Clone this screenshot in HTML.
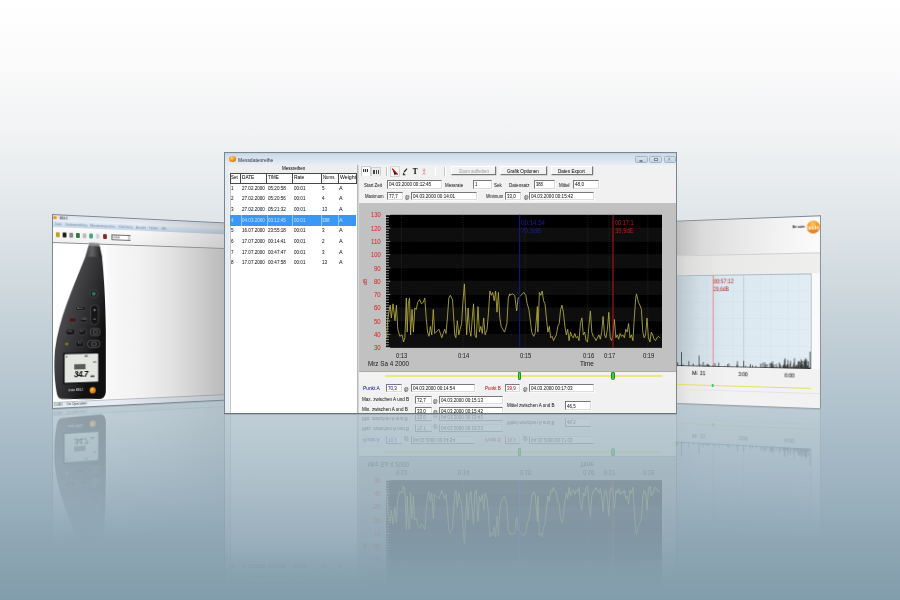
<!DOCTYPE html><html><head><meta charset="utf-8"><title>Messdatenreihe</title><style>
html,body{margin:0;padding:0}
body{width:900px;height:600px;overflow:hidden;position:relative;font-family:"Liberation Sans",sans-serif;background:#fff}
.t{position:absolute;white-space:nowrap;transform-origin:0 50%;line-height:1.15;font-family:"Liberation Sans",sans-serif;text-shadow:0 0 0.25px rgba(40,40,40,.3)}
#bg{position:absolute;left:0;top:0;width:900px;height:600px;background:linear-gradient(#ffffff 0,#fbfbfc 10%,#f3f4f5 20%,#e8ecee 30%,#dbe2e6 40%,#cbd6dc 50%,#bccad3 60%,#adc0cb 70%,#9eb4c0 80%,#8fa7b5 90%,#819cab 100%)}
#main{position:absolute;left:224px;top:152px;width:453px;height:262px;overflow:hidden;background:#f1f1f1;-webkit-box-reflect:below 0 linear-gradient(to bottom,transparent 33%,rgba(0,0,0,.025) 40%,rgba(0,0,0,.10) 52%,rgba(0,0,0,.17) 75%,rgba(0,0,0,.21) 100%)}
.panel{position:absolute;left:0;top:0;transform-origin:0 0;overflow:hidden}
</style></head><body><div id="bg"></div><div class="panel" id="lp" style="width:195.06px;height:195px;transform:matrix3d(0.9976805,0.1518337,0,0.0004874277,0,1,0,0,0,0,1,0,52,214,0,1);-webkit-box-reflect:below 0 linear-gradient(to bottom,transparent 30%,rgba(0,0,0,.06) 50%,rgba(0,0,0,.15) 75%,rgba(0,0,0,.21) 100%)"><div style="position:absolute;left:0.0px;top:0.0px;width:201.0px;height:6.6px;background:linear-gradient(#d9e2ea,#eaeff3)"></div><div style="position:absolute;left:0.8px;top:1.6px;width:3.8px;height:3.8px;border-radius:50%;background:#f0961c"></div><span class="t" style="left:7.5px;top:1.1px;font-size:4.60px;color:#333;transform:scaleX(0.707);">816-1</span><div style="position:absolute;left:0.0px;top:6.6px;width:201.0px;height:6.3px;background:linear-gradient(#dfe8f3,#c6d6e9)"></div><span class="t" style="left:3.4px;top:7.4px;font-size:4.40px;color:#73869f;transform:scaleX(0.675);text-shadow:none">Datei</span><span class="t" style="left:13.8px;top:7.4px;font-size:4.40px;color:#73869f;transform:scaleX(0.654);text-shadow:none">Geräteeinstellung</span><span class="t" style="left:39.8px;top:7.4px;font-size:4.40px;color:#73869f;transform:scaleX(0.701);text-shadow:none">Messdatenspeicher</span><span class="t" style="left:71.0px;top:7.4px;font-size:4.40px;color:#73869f;transform:scaleX(0.463);text-shadow:none">Echtzeitmessung</span><span class="t" style="left:90.2px;top:7.4px;font-size:4.40px;color:#73869f;transform:scaleX(0.781);text-shadow:none">Ansicht</span><span class="t" style="left:105.2px;top:7.4px;font-size:4.40px;color:#73869f;transform:scaleX(0.666);text-shadow:none">Fenster</span><span class="t" style="left:118.9px;top:7.4px;font-size:4.40px;color:#73869f;transform:scaleX(0.616);text-shadow:none">Hilfe</span><div style="position:absolute;left:0.0px;top:12.9px;width:201.0px;height:15.6px;background:linear-gradient(#fafafa,#f1f1f1)"></div><div style="position:absolute;left:3.7px;top:18.2px;width:4.2px;height:4.4px;background:#b9a52a;border-radius:1px"></div><div style="position:absolute;left:10.6px;top:18.2px;width:4.2px;height:4.4px;background:#1c1c1c;border-radius:1px"></div><div style="position:absolute;left:17.9px;top:18.2px;width:4.2px;height:4.4px;background:#8a8a8a;border-radius:1px"></div><div style="position:absolute;left:25.0px;top:18.2px;width:4.2px;height:4.4px;background:#2c7c3c;border-radius:1px"></div><div style="position:absolute;left:32.1px;top:18.2px;width:4.2px;height:4.4px;background:#bdbdbd;border-radius:1px"></div><div style="position:absolute;left:39.1px;top:18.2px;width:4.2px;height:4.4px;background:#45a58a;border-radius:1px"></div><div style="position:absolute;left:45.9px;top:18.2px;width:4.2px;height:4.4px;background:#d5d5d5;border-radius:1px"></div><div style="position:absolute;left:53.6px;top:18.2px;width:4.2px;height:4.4px;background:#8c2626;border-radius:1px"></div><div style="position:absolute;left:62.5px;top:17.8px;width:21.7px;height:5.8px;background:#fff;border:0.6px solid #6a6a6a;box-sizing:border-box"></div><div style="position:absolute;left:80.7px;top:18.5px;width:3.0px;height:4.4px;background:#d0d0d0"></div><span class="t" style="left:63.9px;top:18.7px;font-size:3.60px;color:#444;transform:scaleX(0.800);">COM1</span><div style="position:absolute;left:0.0px;top:0.0px;width:201.0px;height:28.4px;background:linear-gradient(90deg,rgba(0,0,0,0) 0,rgba(0,0,0,0) 45%,rgba(0,0,0,.07) 70%,rgba(0,0,0,.17) 100%)"></div><div style="position:absolute;left:0.0px;top:28.4px;width:201.0px;height:159.4px;background:linear-gradient(90deg,#fff 0,#fff 28%,#f8f8f8 30%,#f1f1f1 48%,#dfdfdf 68%,#c4c4c4 88%,#b6b6b6 100%)"></div><div style="position:absolute;left:0.0px;top:28.4px;width:57.0px;height:159.4px;background:#fff"></div><div style="position:absolute;left:0.0px;top:28.0px;width:201.0px;height:0.7px;background:#8f8f8f"></div><div style="position:absolute;left:0.0px;top:187.6px;width:201.0px;height:7.4px;background:#e6ecf2;border-top:0.6px solid #b8c2cc;box-sizing:border-box"></div><span class="t" style="left:1.5px;top:189.4px;font-size:3.90px;color:#555;transform:scaleX(0.800);">COM1</span><span class="t" style="left:14.6px;top:189.4px;font-size:3.90px;color:#555;transform:scaleX(0.918);">On Operation</span><svg style="position:absolute;left:0;top:0" width="201" height="195" viewBox="0 0 201 195"><defs><linearGradient id="dg" gradientUnits="userSpaceOnUse" x1="9.3" y1="83.9" x2="58.2" y2="99.0"><stop offset="0" stop-color="#5c5c5f"/><stop offset=".1" stop-color="#4c4c4f"/><stop offset=".4" stop-color="#3a3a3c"/><stop offset=".75" stop-color="#252527"/><stop offset="1" stop-color="#111112"/></linearGradient><linearGradient id="ng" x1="0" x2="1"><stop offset="0" stop-color="#444446"/><stop offset=".4" stop-color="#626265"/><stop offset="1" stop-color="#1a1a1b"/></linearGradient><radialGradient id="og" cx=".4" cy=".35"><stop offset="0" stop-color="#ffc35a"/><stop offset="1" stop-color="#e0760c"/></radialGradient></defs><path d="M39.31 27.28 L49.72 27.54 L50.15 30.81 L38.56 30.77 Z" fill="#8d8d8f"/><path d="M38.34 30.37 L50.37 30.39 L52.96 42.21 L34.72 42.28 Z" fill="url(#ng)"/><path d="M34.94 41.67 L52.74 41.60 C54.91 60.02 56.43 85.68 56.86 116.51 L56.86 178.69 C56.86 184.34 54.37 187.11 50.04 187.03 L10.86 185.46 C6.71 185.29 5.36 182.22 4.54 177.18 C2.68 166.09 1.65 152.04 3.09 136.06 C6.71 106.03 20.78 75.78 34.94 41.67 Z" fill="url(#dg)"/><circle cx="43.91" cy="79.42" r="3.90" fill="#161618" stroke="#58585b" stroke-width="0.70"/><circle cx="43.91" cy="79.42" r="2.10" fill="#2e7560"/><rect x="40.70" y="90.87" width="8.05" height="19.94" rx="3.40" fill="#151517" stroke="#5c5c5f" stroke-width="0.60" /><rect x="43.37" y="95.56" width="2.79" height="0.82" rx="0.00" fill="#8a8a8a" /><rect x="44.34" y="94.64" width="0.86" height="2.66" rx="0.00" fill="#8a8a8a" /><rect x="43.37" y="104.75" width="2.79" height="0.83" rx="0.00" fill="#8a8a8a" /><rect x="24.77" y="92.24" width="10.38" height="4.35" rx="2.20" fill="#19191b" stroke="#59595c" stroke-width="0.50" /><rect x="17.63" y="103.65" width="7.98" height="4.88" rx="2.20" fill="#471a1c" stroke="#59595c" stroke-width="0.50" /><rect x="29.42" y="103.89" width="7.43" height="4.50" rx="2.20" fill="#19191b" stroke="#59595c" stroke-width="0.50" /><rect x="14.50" y="115.12" width="9.43" height="6.15" rx="2.20" fill="#19191b" stroke="#59595c" stroke-width="0.50" /><rect x="27.94" y="115.24" width="7.96" height="6.17" rx="2.20" fill="#19191b" stroke="#59595c" stroke-width="0.50" /><rect x="40.70" y="114.94" width="9.67" height="7.05" rx="1.80" fill="#19191b" stroke="#707073" stroke-width="0.70" /><rect x="43.27" y="116.80" width="4.51" height="3.32" rx="0.40" fill="none" stroke="#9a9a9a" stroke-width="0.50" /><circle cx="15.33" cy="130.24" r="1.40" fill="#8d7f1c"/><rect x="24.77" y="127.36" width="8.67" height="6.22" rx="2.20" fill="#19191b" stroke="#59595c" stroke-width="0.50" /><rect x="37.49" y="127.13" width="12.88" height="7.15" rx="2.80" fill="#19191b" stroke="#707073" stroke-width="0.70" /><rect x="41.55" y="129.23" width="4.94" height="2.94" rx="0.40" fill="none" stroke="#9a9a9a" stroke-width="0.50" /><rect x="11.58" y="139.03" width="38.57" height="31.71" rx="1.20" fill="#111113" /><rect x="13.04" y="140.47" width="35.60" height="28.79" rx="0.60" fill="#e3e6e1" /><rect x="23.19" y="150.90" width="11.85" height="5.29" rx="0.00" fill="#2c2c2c" opacity=".75"/><rect x="40.48" y="162.86" width="4.07" height="1.35" rx="0.00" fill="#222" /><circle cx="42.73" cy="177.94" r="3.30" fill="url(#og)"/></svg><span class="t" style="left:22.7px;top:155.9px;font-size:9.40px;color:#111;transform:scaleX(0.875);font-weight:bold;font-style:italic;letter-spacing:-0.3px">34.7</span><span class="t" style="left:14.1px;top:142.0px;font-size:3.40px;color:#222;transform:scaleX(0.900);">A</span><span class="t" style="left:34.1px;top:142.1px;font-size:3.20px;color:#222;transform:scaleX(0.900);">dB</span><span class="t" style="left:42.6px;top:147.8px;font-size:2.80px;color:#333;transform:scaleX(0.900);">1/8</span><span class="t" style="left:16.8px;top:175.4px;font-size:3.90px;color:#d0d0d0;transform:scaleX(0.776);font-weight:bold">testo 816-1</span><span class="t" style="left:25.6px;top:92.9px;font-size:2.80px;color:#aaa;transform:scaleX(0.900);">Menu</span><span class="t" style="left:30.5px;top:104.6px;font-size:2.60px;color:#aaa;transform:scaleX(0.900);">Hold</span><span class="t" style="left:16.0px;top:116.7px;font-size:2.60px;color:#aaa;transform:scaleX(0.900);">Time</span><span class="t" style="left:29.4px;top:116.8px;font-size:2.60px;color:#aaa;transform:scaleX(0.900);">A/C</span><span class="t" style="left:26.5px;top:128.9px;font-size:2.60px;color:#aaa;transform:scaleX(0.900);">F/S</span><div style="position:absolute;left:0.0px;top:187.6px;width:201.0px;height:7.4px;background:linear-gradient(90deg,rgba(0,0,0,0) 0,rgba(0,0,0,0) 35%,rgba(0,0,0,.08) 60%,rgba(0,0,0,.2) 100%)"></div><div style="position:absolute;left:0.0px;top:0.0px;width:201.0px;height:195.0px;box-sizing:border-box;border:0.9px solid #7d868e;border-right:none"></div></div><div class="panel" id="rp" style="clip-path:polygon(6.78px 0,100% 0,100% 300%,6.78px 300%);width:156px;height:194px;transform:matrix3d(0.6634162,-0.115502,0,-0.0003709287,0,0.9416495,0,0,0,0,1,0,670,220.86,0,1);-webkit-box-reflect:below 0 linear-gradient(to bottom,transparent 30%,rgba(0,0,0,.05) 50%,rgba(0,0,0,.13) 75%,rgba(0,0,0,.19) 100%)"><div style="position:absolute;left:0.0px;top:0.0px;width:156.0px;height:194.0px;background:#fafafa"></div><div style="position:absolute;left:0.0px;top:0.0px;width:156.0px;height:38.0px;background:linear-gradient(90deg,#ababab 0,#c4c4c4 8%,#dadada 22%,#e7e7e7 45%,#f3f3f3 75%,#fbfbfb 100%)"></div><div style="position:absolute;left:0.0px;top:37.4px;width:156.0px;height:1.0px;background:#cfcfcf"></div><div style="position:absolute;left:0.0px;top:38.4px;width:156.0px;height:19.9px;background:linear-gradient(90deg,#c4c4c4 0,#dcdcda 12%,#e9e9e7 35%,#efefed 100%)"></div><div style="position:absolute;left:0.0px;top:58.3px;width:145.8px;height:96.1px;background:linear-gradient(90deg,#a9b4bc 0,#bfcbd3 9%,#d2dee6 22%,#dce8f0 40%,#e1edf5 100%)"></div><div style="position:absolute;left:0.0px;top:58.3px;width:145.8px;height:96.1px;background:repeating-linear-gradient(90deg,rgba(140,170,190,.07) 0 0.5px,transparent 0.5px 5.6px),repeating-linear-gradient(0deg,rgba(140,170,190,.07) 0 0.5px,transparent 0.5px 5.6px)"></div><div style="position:absolute;left:78.1px;top:58.3px;width:0.6px;height:96.1px;background:#c0ced8"></div><div style="position:absolute;left:0.0px;top:57.9px;width:145.8px;height:0.7px;background:#a9b9c3"></div><div style="position:absolute;left:145.8px;top:57.9px;width:0.6px;height:96.7px;background:#b9c6ce"></div><div style="position:absolute;left:45.7px;top:58.3px;width:0.6px;height:96.1px;background:#e08c8c"></div><span class="t" style="left:47.0px;top:61.2px;font-size:6.40px;color:#d63636;transform:scaleX(0.843);">00:57:12</span><span class="t" style="left:47.0px;top:68.7px;font-size:6.40px;color:#d63636;transform:scaleX(0.789);">29,6dB</span><svg style="position:absolute;left:0;top:125.4px" width="156" height="30" viewBox="0 125.4 156 30"><line x1="0" x2="145.8" y1="154.0" y2="154.0" stroke="#222" stroke-width="0.7"/><line x1="4.2" x2="4.2" y1="154.0" y2="152.3" stroke="#0c0c0c" stroke-width="0.65"/><line x1="6.3" x2="6.3" y1="154.0" y2="152.9" stroke="#0c0c0c" stroke-width="0.65"/><line x1="7.0" x2="7.0" y1="154.0" y2="151.2" stroke="#0c0c0c" stroke-width="0.65"/><line x1="8.4" x2="8.4" y1="154.0" y2="150.4" stroke="#0c0c0c" stroke-width="0.65"/><line x1="11.2" x2="11.2" y1="154.0" y2="153.4" stroke="#0c0c0c" stroke-width="0.65"/><line x1="12.6" x2="12.6" y1="154.0" y2="153.2" stroke="#0c0c0c" stroke-width="0.65"/><line x1="14.0" x2="14.0" y1="154.0" y2="152.5" stroke="#0c0c0c" stroke-width="0.65"/><line x1="25.2" x2="25.2" y1="154.0" y2="151.4" stroke="#0c0c0c" stroke-width="0.65"/><line x1="29.4" x2="29.4" y1="154.0" y2="153.1" stroke="#0c0c0c" stroke-width="0.65"/><line x1="32.9" x2="32.9" y1="154.0" y2="151.9" stroke="#0c0c0c" stroke-width="0.65"/><line x1="35.0" x2="35.0" y1="154.0" y2="152.8" stroke="#0c0c0c" stroke-width="0.65"/><line x1="37.1" x2="37.1" y1="154.0" y2="153.0" stroke="#0c0c0c" stroke-width="0.65"/><line x1="37.8" x2="37.8" y1="154.0" y2="153.3" stroke="#0c0c0c" stroke-width="0.65"/><line x1="39.2" x2="39.2" y1="154.0" y2="152.2" stroke="#0c0c0c" stroke-width="0.65"/><line x1="40.6" x2="40.6" y1="154.0" y2="151.5" stroke="#0c0c0c" stroke-width="0.65"/><line x1="41.3" x2="41.3" y1="154.0" y2="151.9" stroke="#0c0c0c" stroke-width="0.65"/><line x1="42.0" x2="42.0" y1="154.0" y2="152.6" stroke="#0c0c0c" stroke-width="0.65"/><line x1="42.7" x2="42.7" y1="154.0" y2="153.0" stroke="#0c0c0c" stroke-width="0.65"/><line x1="46.2" x2="46.2" y1="154.0" y2="152.7" stroke="#0c0c0c" stroke-width="0.65"/><line x1="48.3" x2="48.3" y1="154.0" y2="150.4" stroke="#0c0c0c" stroke-width="0.65"/><line x1="49.0" x2="49.0" y1="154.0" y2="153.0" stroke="#0c0c0c" stroke-width="0.65"/><line x1="51.8" x2="51.8" y1="154.0" y2="153.3" stroke="#0c0c0c" stroke-width="0.65"/><line x1="58.8" x2="58.8" y1="154.0" y2="153.2" stroke="#0c0c0c" stroke-width="0.65"/><line x1="61.6" x2="61.6" y1="154.0" y2="151.5" stroke="#0c0c0c" stroke-width="0.65"/><line x1="63.0" x2="63.0" y1="154.0" y2="150.6" stroke="#0c0c0c" stroke-width="0.65"/><line x1="65.8" x2="65.8" y1="154.0" y2="153.3" stroke="#0c0c0c" stroke-width="0.65"/><line x1="71.4" x2="71.4" y1="154.0" y2="151.6" stroke="#0c0c0c" stroke-width="0.65"/><line x1="72.1" x2="72.1" y1="154.0" y2="153.1" stroke="#0c0c0c" stroke-width="0.65"/><line x1="76.3" x2="76.3" y1="154.0" y2="153.4" stroke="#0c0c0c" stroke-width="0.65"/><line x1="78.4" x2="78.4" y1="154.0" y2="153.2" stroke="#0c0c0c" stroke-width="0.65"/><line x1="80.5" x2="80.5" y1="154.0" y2="152.8" stroke="#0c0c0c" stroke-width="0.65"/><line x1="84.7" x2="84.7" y1="154.0" y2="153.3" stroke="#0c0c0c" stroke-width="0.65"/><line x1="85.4" x2="85.4" y1="154.0" y2="150.8" stroke="#0c0c0c" stroke-width="0.65"/><line x1="87.5" x2="87.5" y1="154.0" y2="151.9" stroke="#0c0c0c" stroke-width="0.65"/><line x1="91.0" x2="91.0" y1="154.0" y2="152.2" stroke="#0c0c0c" stroke-width="0.65"/><line x1="95.9" x2="95.9" y1="154.0" y2="150.1" stroke="#0c0c0c" stroke-width="0.65"/><line x1="98.0" x2="98.0" y1="154.0" y2="149.2" stroke="#0c0c0c" stroke-width="0.65"/><line x1="100.8" x2="100.8" y1="154.0" y2="150.8" stroke="#0c0c0c" stroke-width="0.65"/><line x1="102.2" x2="102.2" y1="154.0" y2="150.4" stroke="#0c0c0c" stroke-width="0.65"/><line x1="105.0" x2="105.0" y1="154.0" y2="149.7" stroke="#0c0c0c" stroke-width="0.65"/><line x1="106.4" x2="106.4" y1="154.0" y2="148.8" stroke="#0c0c0c" stroke-width="0.65"/><line x1="107.1" x2="107.1" y1="154.0" y2="149.6" stroke="#0c0c0c" stroke-width="0.65"/><line x1="107.8" x2="107.8" y1="154.0" y2="150.7" stroke="#0c0c0c" stroke-width="0.65"/><line x1="108.5" x2="108.5" y1="154.0" y2="152.8" stroke="#0c0c0c" stroke-width="0.65"/><line x1="109.9" x2="109.9" y1="154.0" y2="150.6" stroke="#0c0c0c" stroke-width="0.65"/><line x1="111.3" x2="111.3" y1="154.0" y2="153.4" stroke="#0c0c0c" stroke-width="0.65"/><line x1="112.0" x2="112.0" y1="154.0" y2="150.1" stroke="#0c0c0c" stroke-width="0.65"/><line x1="112.7" x2="112.7" y1="154.0" y2="153.0" stroke="#0c0c0c" stroke-width="0.65"/><line x1="114.8" x2="114.8" y1="154.0" y2="148.4" stroke="#0c0c0c" stroke-width="0.65"/><line x1="115.5" x2="115.5" y1="154.0" y2="150.2" stroke="#0c0c0c" stroke-width="0.65"/><line x1="116.2" x2="116.2" y1="154.0" y2="151.8" stroke="#0c0c0c" stroke-width="0.65"/><line x1="118.3" x2="118.3" y1="154.0" y2="151.2" stroke="#0c0c0c" stroke-width="0.65"/><line x1="118.9" x2="118.9" y1="154.0" y2="151.8" stroke="#0c0c0c" stroke-width="0.65"/><line x1="119.4" x2="119.4" y1="154.0" y2="150.1" stroke="#0c0c0c" stroke-width="0.65"/><line x1="120.0" x2="120.0" y1="154.0" y2="145.7" stroke="#0c0c0c" stroke-width="0.65"/><line x1="120.5" x2="120.5" y1="154.0" y2="144.2" stroke="#0c0c0c" stroke-width="0.65"/><line x1="121.1" x2="121.1" y1="154.0" y2="152.8" stroke="#0c0c0c" stroke-width="0.65"/><line x1="121.6" x2="121.6" y1="154.0" y2="152.1" stroke="#0c0c0c" stroke-width="0.65"/><line x1="122.2" x2="122.2" y1="154.0" y2="150.9" stroke="#0c0c0c" stroke-width="0.65"/><line x1="122.7" x2="122.7" y1="154.0" y2="150.1" stroke="#0c0c0c" stroke-width="0.65"/><line x1="123.3" x2="123.3" y1="154.0" y2="145.8" stroke="#0c0c0c" stroke-width="0.65"/><line x1="123.8" x2="123.8" y1="154.0" y2="150.6" stroke="#0c0c0c" stroke-width="0.65"/><line x1="124.4" x2="124.4" y1="154.0" y2="153.3" stroke="#0c0c0c" stroke-width="0.65"/><line x1="124.9" x2="124.9" y1="154.0" y2="153.3" stroke="#0c0c0c" stroke-width="0.65"/><line x1="125.5" x2="125.5" y1="154.0" y2="149.3" stroke="#0c0c0c" stroke-width="0.65"/><line x1="126.0" x2="126.0" y1="154.0" y2="146.5" stroke="#0c0c0c" stroke-width="0.65"/><line x1="126.6" x2="126.6" y1="154.0" y2="153.0" stroke="#0c0c0c" stroke-width="0.65"/><line x1="127.1" x2="127.1" y1="154.0" y2="153.3" stroke="#0c0c0c" stroke-width="0.65"/><line x1="127.7" x2="127.7" y1="154.0" y2="152.4" stroke="#0c0c0c" stroke-width="0.65"/><line x1="128.2" x2="128.2" y1="154.0" y2="153.3" stroke="#0c0c0c" stroke-width="0.65"/><line x1="128.8" x2="128.8" y1="154.0" y2="150.6" stroke="#0c0c0c" stroke-width="0.65"/><line x1="129.3" x2="129.3" y1="154.0" y2="148.3" stroke="#0c0c0c" stroke-width="0.65"/><line x1="129.9" x2="129.9" y1="154.0" y2="144.0" stroke="#0c0c0c" stroke-width="0.65"/><line x1="130.4" x2="130.4" y1="154.0" y2="152.6" stroke="#0c0c0c" stroke-width="0.65"/><line x1="131.0" x2="131.0" y1="154.0" y2="152.7" stroke="#0c0c0c" stroke-width="0.65"/><line x1="131.5" x2="131.5" y1="154.0" y2="150.4" stroke="#0c0c0c" stroke-width="0.65"/><line x1="132.1" x2="132.1" y1="154.0" y2="152.7" stroke="#0c0c0c" stroke-width="0.65"/><line x1="132.6" x2="132.6" y1="154.0" y2="151.5" stroke="#0c0c0c" stroke-width="0.65"/><line x1="133.2" x2="133.2" y1="154.0" y2="149.8" stroke="#0c0c0c" stroke-width="0.65"/><line x1="133.7" x2="133.7" y1="154.0" y2="147.0" stroke="#0c0c0c" stroke-width="0.65"/><line x1="134.3" x2="134.3" y1="154.0" y2="146.5" stroke="#0c0c0c" stroke-width="0.65"/><line x1="134.8" x2="134.8" y1="154.0" y2="153.2" stroke="#0c0c0c" stroke-width="0.65"/><line x1="135.4" x2="135.4" y1="154.0" y2="147.4" stroke="#0c0c0c" stroke-width="0.65"/><line x1="135.9" x2="135.9" y1="154.0" y2="150.5" stroke="#0c0c0c" stroke-width="0.65"/><line x1="136.5" x2="136.5" y1="154.0" y2="144.8" stroke="#0c0c0c" stroke-width="0.65"/><line x1="137.0" x2="137.0" y1="154.0" y2="149.3" stroke="#0c0c0c" stroke-width="0.65"/><line x1="137.6" x2="137.6" y1="154.0" y2="146.4" stroke="#0c0c0c" stroke-width="0.65"/><line x1="138.1" x2="138.1" y1="154.0" y2="150.4" stroke="#0c0c0c" stroke-width="0.65"/><line x1="138.7" x2="138.7" y1="154.0" y2="152.6" stroke="#0c0c0c" stroke-width="0.65"/><line x1="139.2" x2="139.2" y1="154.0" y2="146.1" stroke="#0c0c0c" stroke-width="0.65"/><line x1="139.8" x2="139.8" y1="154.0" y2="147.5" stroke="#0c0c0c" stroke-width="0.65"/><line x1="140.3" x2="140.3" y1="154.0" y2="144.9" stroke="#0c0c0c" stroke-width="0.65"/><line x1="140.9" x2="140.9" y1="154.0" y2="143.7" stroke="#0c0c0c" stroke-width="0.65"/><line x1="141.4" x2="141.4" y1="154.0" y2="146.5" stroke="#0c0c0c" stroke-width="0.65"/><line x1="142.0" x2="142.0" y1="154.0" y2="144.8" stroke="#0c0c0c" stroke-width="0.65"/><line x1="142.5" x2="142.5" y1="154.0" y2="151.5" stroke="#0c0c0c" stroke-width="0.65"/><line x1="143.1" x2="143.1" y1="154.0" y2="150.7" stroke="#0c0c0c" stroke-width="0.65"/><line x1="143.6" x2="143.6" y1="154.0" y2="146.8" stroke="#0c0c0c" stroke-width="0.65"/><line x1="144.2" x2="144.2" y1="154.0" y2="153.3" stroke="#0c0c0c" stroke-width="0.65"/><line x1="144.7" x2="144.7" y1="154.0" y2="153.2" stroke="#0c0c0c" stroke-width="0.65"/><line x1="145.3" x2="145.3" y1="154.0" y2="152.8" stroke="#0c0c0c" stroke-width="0.65"/><line x1="6.5" x2="6.5" y1="154.0" y2="150.0" stroke="#0c0c0c" stroke-width="0.65"/><line x1="12.5" x2="12.5" y1="154.0" y2="139.5" stroke="#0c0c0c" stroke-width="0.65"/><line x1="20.5" x2="20.5" y1="154.0" y2="149.0" stroke="#0c0c0c" stroke-width="0.65"/><line x1="31.5" x2="31.5" y1="154.0" y2="143.0" stroke="#0c0c0c" stroke-width="0.65"/><line x1="36.0" x2="36.0" y1="154.0" y2="149.5" stroke="#0c0c0c" stroke-width="0.65"/><line x1="52.5" x2="52.5" y1="154.0" y2="150.0" stroke="#0c0c0c" stroke-width="0.65"/><line x1="72.0" x2="72.0" y1="154.0" y2="148.0" stroke="#0c0c0c" stroke-width="0.65"/><line x1="78.5" x2="78.5" y1="154.0" y2="147.5" stroke="#0c0c0c" stroke-width="0.65"/><line x1="100.0" x2="100.0" y1="154.0" y2="148.5" stroke="#0c0c0c" stroke-width="0.65"/><line x1="108.0" x2="108.0" y1="154.0" y2="147.5" stroke="#0c0c0c" stroke-width="0.65"/><line x1="145.3" x2="145.3" y1="154.0" y2="137.0" stroke="#0c0c0c" stroke-width="0.65"/></svg><div style="position:absolute;left:0.0px;top:154.4px;width:156.0px;height:39.6px;background:linear-gradient(90deg,#d6d6d6 0,#eaeaea 14%,#f2f2f2 40%)"></div><span class="t" style="left:24.3px;top:157.8px;font-size:6.00px;color:#222;transform:scaleX(0.881);">Mi&nbsp; 21</span><span class="t" style="left:73.4px;top:157.8px;font-size:6.00px;color:#222;transform:scaleX(0.822);">3:00</span><span class="t" style="left:119.7px;top:157.9px;font-size:6.00px;color:#222;transform:scaleX(0.856);">6:00</span><div style="position:absolute;left:0.0px;top:172.7px;width:145.8px;height:1.2px;background:#e3e05a"></div><div style="position:absolute;left:45.0px;top:171.7px;width:2.2px;height:3.2px;background:#3fcf3f"></div><div style="position:absolute;left:0.0px;top:177.9px;width:156.0px;height:0.6px;background:#e4e4e4"></div><div style="position:absolute;left:141.5px;top:4.9px;width:13.6px;height:13.6px;border-radius:50%;background:radial-gradient(circle at 45% 25%,#ffc870 0,#f7981f 40%,#e8730c 85%,#d9650a 100%);overflow:hidden"><span class="t" style="left:0.5px;top:3.4px;font-size:6.2px;color:#fff;font-weight:bold;transform:scaleX(0.88);text-shadow:none;letter-spacing:-0.1px">testo</span></div><span class="t" style="left:127.5px;top:9.2px;font-size:4.20px;color:#444;transform:scaleX(0.772);font-weight:bold">Be sure.</span><div style="position:absolute;left:154.9px;top:0.0px;width:1.1px;height:194.0px;background:#8c9399"></div><div style="position:absolute;left:0.0px;top:0.0px;width:156.0px;height:0.9px;background:#808990"></div><div style="position:absolute;left:0.0px;top:193.1px;width:156.0px;height:0.9px;background:#9ea4a9"></div></div><div id="main"><div style="position:absolute;left:0.0px;top:0.0px;width:453.0px;height:13.0px;background:linear-gradient(#bccbdb 0,#d0dce9 22%,#dae4ef 60%,#e6edf5 100%)"></div><div style="position:absolute;left:5.4px;top:4.0px;width:6.6px;height:6.4px;border-radius:50%;background:radial-gradient(circle at 40% 30%,#ffd27a 0,#f39a1f 45%,#c8560c 100%)"></div><span class="t" style="left:14.3px;top:4.0px;font-size:6.20px;color:#4c5560;transform:scaleX(0.803);">Messdatenreihe</span><div style="position:absolute;left:411.2px;top:4.0px;width:12.4px;height:7.2px;box-sizing:border-box;border:0.8px solid #a3b3c3;border-radius:1.5px;background:linear-gradient(#d6e0eb,#c6d3e0)"></div><div style="position:absolute;left:425.4px;top:4.0px;width:12.4px;height:7.2px;box-sizing:border-box;border:0.8px solid #a3b3c3;border-radius:1.5px;background:linear-gradient(#d6e0eb,#c6d3e0)"></div><div style="position:absolute;left:439.6px;top:4.0px;width:12.4px;height:7.2px;box-sizing:border-box;border:0.8px solid #a3b3c3;border-radius:1.5px;background:linear-gradient(#d6e0eb,#c6d3e0)"></div><div style="position:absolute;left:415.2px;top:7.6px;width:4.2px;height:1.8px;box-sizing:border-box;border:0.7px solid #7a8896;border-radius:1px;background:#eef3f8"></div><div style="position:absolute;left:429.6px;top:5.8px;width:4.2px;height:3.6px;box-sizing:border-box;border:0.8px solid #7a8896;background:#eef3f8"></div><span class="t" style="left:443.4px;top:4.9px;font-size:4.60px;color:#7a8896;transform:scaleX(1.000);text-shadow:none">✕</span><div style="position:absolute;left:0.0px;top:13.0px;width:453.0px;height:250.0px;background:#e6ecf3"></div><div style="position:absolute;left:5.4px;top:13.0px;width:447.0px;height:250.0px;background:#f1f1f1"></div><div style="position:absolute;left:5.5px;top:12.5px;width:127.5px;height:250.0px;background:#fff;border-left:1px solid #c2c6ca"></div><div style="position:absolute;left:5.5px;top:12.5px;width:127.5px;height:8.0px;background:#eeeeee"></div><span class="t" style="left:58.0px;top:13.2px;font-size:5.60px;color:#222;transform:scaleX(0.808);">Messreihen</span><div style="position:absolute;left:5.8px;top:20.5px;width:126.8px;height:11.0px;background:#fff;box-sizing:border-box;border:1px solid #484848;border-width:1.1px 1px 1.2px 1px"></div><span class="t" style="left:7.2px;top:21.9px;font-size:6.00px;color:#1a1a1a;transform:scaleX(0.755);">Set</span><div style="position:absolute;left:16.2px;top:20.5px;width:1.3px;height:11.0px;background:#484848"></div><span class="t" style="left:18.3px;top:21.9px;font-size:6.00px;color:#1a1a1a;transform:scaleX(0.784);">DATE</span><div style="position:absolute;left:42.2px;top:20.5px;width:1.3px;height:11.0px;background:#484848"></div><span class="t" style="left:44.3px;top:21.9px;font-size:6.00px;color:#1a1a1a;transform:scaleX(0.740);">TIME</span><div style="position:absolute;left:67.9px;top:20.5px;width:1.3px;height:11.0px;background:#484848"></div><span class="t" style="left:69.9px;top:21.9px;font-size:6.00px;color:#1a1a1a;transform:scaleX(0.813);">Rate</span><div style="position:absolute;left:96.5px;top:20.5px;width:1.3px;height:11.0px;background:#484848"></div><span class="t" style="left:98.5px;top:21.9px;font-size:6.00px;color:#1a1a1a;transform:scaleX(0.721);">Nums</span><div style="position:absolute;left:113.7px;top:20.5px;width:1.3px;height:11.0px;background:#484848"></div><span class="t" style="left:115.7px;top:21.9px;font-size:6.00px;color:#1a1a1a;transform:scaleX(0.867);">Weight</span><span class="t" style="left:7.2px;top:32.5px;font-size:6.00px;color:#2c2c2c;transform:scaleX(0.760);">1</span><span class="t" style="left:18.2px;top:32.5px;font-size:6.00px;color:#2c2c2c;transform:scaleX(0.760);">27.02.2000</span><span class="t" style="left:44.3px;top:32.5px;font-size:6.00px;color:#2c2c2c;transform:scaleX(0.760);">05:20:58</span><span class="t" style="left:70.0px;top:32.5px;font-size:6.00px;color:#2c2c2c;transform:scaleX(0.760);">00:01</span><span class="t" style="left:98.3px;top:32.5px;font-size:6.00px;color:#2c2c2c;transform:scaleX(0.760);">5</span><span class="t" style="left:115.2px;top:32.5px;font-size:6.00px;color:#2c2c2c;transform:scaleX(0.900);">A</span><span class="t" style="left:7.2px;top:43.4px;font-size:6.00px;color:#2c2c2c;transform:scaleX(0.760);">2</span><span class="t" style="left:18.2px;top:43.4px;font-size:6.00px;color:#2c2c2c;transform:scaleX(0.760);">27.02.2000</span><span class="t" style="left:44.3px;top:43.4px;font-size:6.00px;color:#2c2c2c;transform:scaleX(0.760);">05:20:56</span><span class="t" style="left:70.0px;top:43.4px;font-size:6.00px;color:#2c2c2c;transform:scaleX(0.760);">00:01</span><span class="t" style="left:98.3px;top:43.4px;font-size:6.00px;color:#2c2c2c;transform:scaleX(0.760);">4</span><span class="t" style="left:115.2px;top:43.4px;font-size:6.00px;color:#2c2c2c;transform:scaleX(0.900);">A</span><span class="t" style="left:7.2px;top:53.9px;font-size:6.00px;color:#2c2c2c;transform:scaleX(0.760);">3</span><span class="t" style="left:18.2px;top:53.9px;font-size:6.00px;color:#2c2c2c;transform:scaleX(0.760);">27.02.2000</span><span class="t" style="left:44.3px;top:53.9px;font-size:6.00px;color:#2c2c2c;transform:scaleX(0.760);">05:21:32</span><span class="t" style="left:70.0px;top:53.9px;font-size:6.00px;color:#2c2c2c;transform:scaleX(0.760);">00:01</span><span class="t" style="left:98.3px;top:53.9px;font-size:6.00px;color:#2c2c2c;transform:scaleX(0.760);">13</span><span class="t" style="left:115.2px;top:53.9px;font-size:6.00px;color:#2c2c2c;transform:scaleX(0.900);">A</span><div style="position:absolute;left:6.2px;top:63.4px;width:126.2px;height:10.3px;background:#3a98f4"></div><div style="position:absolute;left:16.5px;top:63.4px;width:0.8px;height:10.3px;background:#8cc6fb"></div><div style="position:absolute;left:42.5px;top:63.4px;width:0.8px;height:10.3px;background:#8cc6fb"></div><div style="position:absolute;left:68.1px;top:63.4px;width:0.8px;height:10.3px;background:#8cc6fb"></div><div style="position:absolute;left:96.7px;top:63.4px;width:0.8px;height:10.3px;background:#8cc6fb"></div><div style="position:absolute;left:113.9px;top:63.4px;width:0.8px;height:10.3px;background:#8cc6fb"></div><span class="t" style="left:7.2px;top:64.9px;font-size:6.00px;color:#c4e2ff;transform:scaleX(0.760);text-shadow:none">4</span><span class="t" style="left:18.2px;top:64.9px;font-size:6.00px;color:#c4e2ff;transform:scaleX(0.760);text-shadow:none">04.03.2000</span><span class="t" style="left:44.3px;top:64.9px;font-size:6.00px;color:#c4e2ff;transform:scaleX(0.760);text-shadow:none">00:12:45</span><span class="t" style="left:70.0px;top:64.9px;font-size:6.00px;color:#c4e2ff;transform:scaleX(0.760);text-shadow:none">00:01</span><span class="t" style="left:98.3px;top:64.9px;font-size:6.00px;color:#c4e2ff;transform:scaleX(0.760);text-shadow:none">388</span><span class="t" style="left:115.2px;top:64.9px;font-size:6.00px;color:#c4e2ff;transform:scaleX(0.900);text-shadow:none">A</span><span class="t" style="left:7.2px;top:75.2px;font-size:6.00px;color:#2c2c2c;transform:scaleX(0.760);">5</span><span class="t" style="left:18.2px;top:75.2px;font-size:6.00px;color:#2c2c2c;transform:scaleX(0.760);">16.07.2000</span><span class="t" style="left:44.3px;top:75.2px;font-size:6.00px;color:#2c2c2c;transform:scaleX(0.760);">23:55:18</span><span class="t" style="left:70.0px;top:75.2px;font-size:6.00px;color:#2c2c2c;transform:scaleX(0.760);">00:01</span><span class="t" style="left:98.3px;top:75.2px;font-size:6.00px;color:#2c2c2c;transform:scaleX(0.760);">3</span><span class="t" style="left:115.2px;top:75.2px;font-size:6.00px;color:#2c2c2c;transform:scaleX(0.900);">A</span><span class="t" style="left:7.2px;top:86.0px;font-size:6.00px;color:#2c2c2c;transform:scaleX(0.760);">6</span><span class="t" style="left:18.2px;top:86.0px;font-size:6.00px;color:#2c2c2c;transform:scaleX(0.760);">17.07.2000</span><span class="t" style="left:44.3px;top:86.0px;font-size:6.00px;color:#2c2c2c;transform:scaleX(0.760);">00:14:41</span><span class="t" style="left:70.0px;top:86.0px;font-size:6.00px;color:#2c2c2c;transform:scaleX(0.760);">00:01</span><span class="t" style="left:98.3px;top:86.0px;font-size:6.00px;color:#2c2c2c;transform:scaleX(0.760);">2</span><span class="t" style="left:115.2px;top:86.0px;font-size:6.00px;color:#2c2c2c;transform:scaleX(0.900);">A</span><span class="t" style="left:7.2px;top:96.6px;font-size:6.00px;color:#2c2c2c;transform:scaleX(0.760);">7</span><span class="t" style="left:18.2px;top:96.6px;font-size:6.00px;color:#2c2c2c;transform:scaleX(0.760);">17.07.2000</span><span class="t" style="left:44.3px;top:96.6px;font-size:6.00px;color:#2c2c2c;transform:scaleX(0.760);">00:47:47</span><span class="t" style="left:70.0px;top:96.6px;font-size:6.00px;color:#2c2c2c;transform:scaleX(0.760);">00:01</span><span class="t" style="left:98.3px;top:96.6px;font-size:6.00px;color:#2c2c2c;transform:scaleX(0.760);">3</span><span class="t" style="left:115.2px;top:96.6px;font-size:6.00px;color:#2c2c2c;transform:scaleX(0.900);">A</span><span class="t" style="left:7.2px;top:107.2px;font-size:6.00px;color:#2c2c2c;transform:scaleX(0.760);">8</span><span class="t" style="left:18.2px;top:107.2px;font-size:6.00px;color:#2c2c2c;transform:scaleX(0.760);">17.07.2000</span><span class="t" style="left:44.3px;top:107.2px;font-size:6.00px;color:#2c2c2c;transform:scaleX(0.760);">00:47:58</span><span class="t" style="left:70.0px;top:107.2px;font-size:6.00px;color:#2c2c2c;transform:scaleX(0.760);">00:01</span><span class="t" style="left:98.3px;top:107.2px;font-size:6.00px;color:#2c2c2c;transform:scaleX(0.760);">13</span><span class="t" style="left:115.2px;top:107.2px;font-size:6.00px;color:#2c2c2c;transform:scaleX(0.900);">A</span><div style="position:absolute;left:133.2px;top:12.5px;width:2.2px;height:250.0px;background:linear-gradient(90deg,#a9a9a9,#e4e4e4)"></div><div style="position:absolute;left:136.5px;top:14.2px;width:10.6px;height:9.6px;background:#fbfbfb;border:0.6px solid #c9c9c9;border-bottom:none;box-sizing:border-box"></div><div style="position:absolute;left:147.4px;top:15.2px;width:9.6px;height:8.6px;background:#ececec;border:0.6px solid #cfcfcf;border-bottom:none;box-sizing:border-box"></div><div style="position:absolute;left:138.6px;top:17.0px;width:5.6px;height:2.6px;background:repeating-linear-gradient(90deg,#333 0 1.2px,#ddd 1.2px 1.9px)"></div><div style="position:absolute;left:149.4px;top:18.4px;width:5.4px;height:3.6px;background:repeating-linear-gradient(90deg,#444 0 1.6px,#eee 1.6px 2.6px)"></div><div style="position:absolute;left:162.0px;top:14.6px;width:0.8px;height:9.4px;background:#c4c4c4"></div><div style="position:absolute;left:162.8px;top:14.6px;width:0.8px;height:9.4px;background:#fff"></div><div style="position:absolute;left:210.6px;top:14.6px;width:0.8px;height:9.4px;background:#c4c4c4"></div><div style="position:absolute;left:211.4px;top:14.6px;width:0.8px;height:9.4px;background:#fff"></div><div style="position:absolute;left:220.2px;top:14.6px;width:0.8px;height:9.4px;background:#c4c4c4"></div><div style="position:absolute;left:221.0px;top:14.6px;width:0.8px;height:9.4px;background:#fff"></div><svg style="position:absolute;left:164.4px;top:13.9px" width="46" height="12" viewBox="0 0 46 12"><rect x="2.6" y="0.8" width="9" height="9.6" fill="#f7f7f7" stroke="#bdbdbd" stroke-width="0.6"/><path d="M4.2 2.6 L9.8 8.6 L7.6 8.2 L6.8 9.6 Z" fill="#111"/><path d="M4.2 2.6 L9.6 8.4" stroke="#d41414" stroke-width="1.3"/><path d="M18.6 2.2 L15.6 5.6 L16.6 6.4 L19.4 3.0 Z" fill="#222"/><path d="M15.2 6.2 L17.8 9.2 L14.8 9.2 Z" fill="#222"/><path d="M15.4 6.8 l1.6 1.6" stroke="#e0c020" stroke-width="0.7"/><path d="M36.1 2.2 v2.0 m-1.5 0.2 h3.0 m-1.5 0 v2.2 l-1.4 2.2 m1.4 -2.2 l1.4 2.2" stroke="#dd6a6a" stroke-width="0.6" fill="none"/></svg><span class="t" style="left:188.7px;top:15.5px;font-size:7.20px;color:#111;transform:scaleX(1.000);font-family:'Liberation Serif',serif;font-weight:bold">T</span><div style="position:absolute;left:227.2px;top:14.0px;width:44.6px;height:9.4px;box-sizing:border-box;background:#f2f2f2;border:0.8px solid;border-color:#fdfdfd #777 #777 #fdfdfd;box-shadow:0.5px 0.5px 0 #b8b8b8"></div><span class="t" style="left:234.6px;top:15.7px;font-size:5.80px;color:#b9b9b9;transform:scaleX(0.734);">Zoom aufheben</span><div style="position:absolute;left:275.9px;top:14.0px;width:46.8px;height:9.4px;box-sizing:border-box;background:#f2f2f2;border:0.8px solid;border-color:#fdfdfd #777 #777 #fdfdfd;box-shadow:0.5px 0.5px 0 #b8b8b8"></div><span class="t" style="left:283.4px;top:15.7px;font-size:5.80px;color:#222;transform:scaleX(0.783);">Grafik Optionen</span><div style="position:absolute;left:326.8px;top:14.0px;width:41.9px;height:9.4px;box-sizing:border-box;background:#f2f2f2;border:0.8px solid;border-color:#fdfdfd #777 #777 #fdfdfd;box-shadow:0.5px 0.5px 0 #b8b8b8"></div><span class="t" style="left:334.0px;top:15.7px;font-size:5.80px;color:#222;transform:scaleX(0.789);">Daten Export</span><span class="t" style="left:140.0px;top:29.7px;font-size:5.80px;color:#303030;transform:scaleX(0.765);">Start Zeit</span><div style="position:absolute;left:163.4px;top:28.4px;width:55.0px;height:8.2px;box-sizing:border-box;background:#fff;border:0.9px solid;border-color:#787878 #dcdcdc #dcdcdc #787878;box-shadow:0.6px 0.6px 0 #fff"></div><span class="t" style="left:165.3px;top:29.3px;font-size:5.90px;color:#2c2c2c;transform:scaleX(0.780);">04.03.2000 00:12:45</span><span class="t" style="left:221.0px;top:29.7px;font-size:5.80px;color:#303030;transform:scaleX(0.763);">Messrate</span><div style="position:absolute;left:249.0px;top:28.4px;width:19.4px;height:8.2px;box-sizing:border-box;background:#fff;border:0.9px solid;border-color:#787878 #dcdcdc #dcdcdc #787878;box-shadow:0.6px 0.6px 0 #fff"></div><span class="t" style="left:250.9px;top:29.3px;font-size:5.90px;color:#2c2c2c;transform:scaleX(0.760);">1</span><span class="t" style="left:270.0px;top:29.7px;font-size:5.80px;color:#303030;transform:scaleX(0.770);">Sek</span><span class="t" style="left:284.9px;top:29.7px;font-size:5.80px;color:#303030;transform:scaleX(0.789);">Datensatz</span><div style="position:absolute;left:310.2px;top:28.4px;width:20.8px;height:8.2px;box-sizing:border-box;background:#fff;border:0.9px solid;border-color:#787878 #dcdcdc #dcdcdc #787878;box-shadow:0.6px 0.6px 0 #fff"></div><span class="t" style="left:312.1px;top:29.3px;font-size:5.90px;color:#2c2c2c;transform:scaleX(0.691);">388</span><span class="t" style="left:335.2px;top:29.7px;font-size:5.80px;color:#303030;transform:scaleX(0.765);">Mittel</span><div style="position:absolute;left:349.2px;top:28.4px;width:26.2px;height:8.2px;box-sizing:border-box;background:#fff;border:0.9px solid;border-color:#787878 #dcdcdc #dcdcdc #787878;box-shadow:0.6px 0.6px 0 #fff"></div><span class="t" style="left:351.1px;top:29.3px;font-size:5.90px;color:#2c2c2c;transform:scaleX(0.784);">48,0</span><span class="t" style="left:141.0px;top:41.2px;font-size:5.80px;color:#303030;transform:scaleX(0.740);">Maximum</span><div style="position:absolute;left:163.0px;top:40.2px;width:15.8px;height:8.0px;box-sizing:border-box;background:#fff;border:0.9px solid;border-color:#787878 #dcdcdc #dcdcdc #787878;box-shadow:0.6px 0.6px 0 #fff"></div><span class="t" style="left:164.9px;top:41.0px;font-size:5.90px;color:#2c2c2c;transform:scaleX(0.766);">77,7</span><span class="t" style="left:181.3px;top:41.3px;font-size:6.20px;color:#3a3a3a;transform:scaleX(0.740);">@</span><div style="position:absolute;left:187.4px;top:40.2px;width:65.4px;height:8.0px;box-sizing:border-box;background:#fff;border:0.9px solid;border-color:#787878 #dcdcdc #dcdcdc #787878;box-shadow:0.6px 0.6px 0 #fff"></div><span class="t" style="left:189.3px;top:41.0px;font-size:5.90px;color:#2c2c2c;transform:scaleX(0.780);">04.03.2000 00:14:01</span><span class="t" style="left:261.5px;top:41.2px;font-size:5.80px;color:#303030;transform:scaleX(0.735);">Minimum</span><div style="position:absolute;left:280.8px;top:40.2px;width:15.9px;height:8.0px;box-sizing:border-box;background:#fff;border:0.9px solid;border-color:#787878 #dcdcdc #dcdcdc #787878;box-shadow:0.6px 0.6px 0 #fff"></div><span class="t" style="left:282.7px;top:41.0px;font-size:5.90px;color:#2c2c2c;transform:scaleX(0.758);">33,0</span><span class="t" style="left:299.5px;top:41.3px;font-size:6.20px;color:#3a3a3a;transform:scaleX(0.740);">@</span><div style="position:absolute;left:305.1px;top:40.2px;width:65.3px;height:8.0px;box-sizing:border-box;background:#fff;border:0.9px solid;border-color:#787878 #dcdcdc #dcdcdc #787878;box-shadow:0.6px 0.6px 0 #fff"></div><span class="t" style="left:307.0px;top:41.0px;font-size:5.90px;color:#2c2c2c;transform:scaleX(0.778);">04.03.2000 00:15:42</span><div style="position:absolute;left:135.4px;top:51.4px;width:316.4px;height:167.8px;background:#c1c1c1"></div><svg style="position:absolute;left:135.4px;top:51.4px" width="316" height="168" viewBox="359.4 203.4 316 168"><rect x="386.4" y="215.2" width="276.0" height="132.8" fill="#000"/><rect x="386.4" y="228.48" width="276.0" height="13.28" fill="#0e0e0e"/><rect x="386.4" y="255.04" width="276.0" height="13.28" fill="#0e0e0e"/><rect x="386.4" y="281.60" width="276.0" height="13.28" fill="#0e0e0e"/><rect x="386.4" y="308.16" width="276.0" height="13.28" fill="#0e0e0e"/><rect x="386.4" y="334.72" width="276.0" height="13.28" fill="#0e0e0e"/><line x1="386.4" x2="662.4" y1="334.72" y2="334.72" stroke="#2a2a2a" stroke-width="0.5" stroke-dasharray="1 1.5"/><line x1="386.4" x2="662.4" y1="321.44" y2="321.44" stroke="#2a2a2a" stroke-width="0.5" stroke-dasharray="1 1.5"/><line x1="386.4" x2="662.4" y1="308.16" y2="308.16" stroke="#2a2a2a" stroke-width="0.5" stroke-dasharray="1 1.5"/><line x1="386.4" x2="662.4" y1="294.88" y2="294.88" stroke="#2a2a2a" stroke-width="0.5" stroke-dasharray="1 1.5"/><line x1="386.4" x2="662.4" y1="281.60" y2="281.60" stroke="#2a2a2a" stroke-width="0.5" stroke-dasharray="1 1.5"/><line x1="386.4" x2="662.4" y1="268.32" y2="268.32" stroke="#2a2a2a" stroke-width="0.5" stroke-dasharray="1 1.5"/><line x1="386.4" x2="662.4" y1="255.04" y2="255.04" stroke="#2a2a2a" stroke-width="0.5" stroke-dasharray="1 1.5"/><line x1="386.4" x2="662.4" y1="241.76" y2="241.76" stroke="#2a2a2a" stroke-width="0.5" stroke-dasharray="1 1.5"/><line x1="386.4" x2="662.4" y1="228.48" y2="228.48" stroke="#2a2a2a" stroke-width="0.5" stroke-dasharray="1 1.5"/><line x1="401.8" x2="401.8" y1="215.2" y2="348.0" stroke="#3a3a3a" stroke-width="0.6" stroke-dasharray="1 1.4"/><line x1="463.6" x2="463.6" y1="215.2" y2="348.0" stroke="#3a3a3a" stroke-width="0.6" stroke-dasharray="1 1.4"/><line x1="525.4" x2="525.4" y1="215.2" y2="348.0" stroke="#3a3a3a" stroke-width="0.6" stroke-dasharray="1 1.4"/><line x1="588.2" x2="588.2" y1="215.2" y2="348.0" stroke="#3a3a3a" stroke-width="0.6" stroke-dasharray="1 1.4"/><line x1="609.6" x2="609.6" y1="215.2" y2="348.0" stroke="#3a3a3a" stroke-width="0.6" stroke-dasharray="1 1.4"/><line x1="648.2" x2="648.2" y1="215.2" y2="348.0" stroke="#3a3a3a" stroke-width="0.6" stroke-dasharray="1 1.4"/><line x1="386.4" x2="390.6" y1="348.00" y2="348.00" stroke="#f2f2f2" stroke-width="0.65"/><line x1="386.4" x2="389.2" y1="345.34" y2="345.34" stroke="#f2f2f2" stroke-width="0.65"/><line x1="386.4" x2="389.2" y1="342.69" y2="342.69" stroke="#f2f2f2" stroke-width="0.65"/><line x1="386.4" x2="389.2" y1="340.03" y2="340.03" stroke="#f2f2f2" stroke-width="0.65"/><line x1="386.4" x2="389.2" y1="337.38" y2="337.38" stroke="#f2f2f2" stroke-width="0.65"/><line x1="386.4" x2="390.6" y1="334.72" y2="334.72" stroke="#f2f2f2" stroke-width="0.65"/><line x1="386.4" x2="389.2" y1="332.06" y2="332.06" stroke="#f2f2f2" stroke-width="0.65"/><line x1="386.4" x2="389.2" y1="329.41" y2="329.41" stroke="#f2f2f2" stroke-width="0.65"/><line x1="386.4" x2="389.2" y1="326.75" y2="326.75" stroke="#f2f2f2" stroke-width="0.65"/><line x1="386.4" x2="389.2" y1="324.10" y2="324.10" stroke="#f2f2f2" stroke-width="0.65"/><line x1="386.4" x2="390.6" y1="321.44" y2="321.44" stroke="#f2f2f2" stroke-width="0.65"/><line x1="386.4" x2="389.2" y1="318.78" y2="318.78" stroke="#f2f2f2" stroke-width="0.65"/><line x1="386.4" x2="389.2" y1="316.13" y2="316.13" stroke="#f2f2f2" stroke-width="0.65"/><line x1="386.4" x2="389.2" y1="313.47" y2="313.47" stroke="#f2f2f2" stroke-width="0.65"/><line x1="386.4" x2="389.2" y1="310.82" y2="310.82" stroke="#f2f2f2" stroke-width="0.65"/><line x1="386.4" x2="390.6" y1="308.16" y2="308.16" stroke="#f2f2f2" stroke-width="0.65"/><line x1="386.4" x2="389.2" y1="305.50" y2="305.50" stroke="#f2f2f2" stroke-width="0.65"/><line x1="386.4" x2="389.2" y1="302.85" y2="302.85" stroke="#f2f2f2" stroke-width="0.65"/><line x1="386.4" x2="389.2" y1="300.19" y2="300.19" stroke="#f2f2f2" stroke-width="0.65"/><line x1="386.4" x2="389.2" y1="297.54" y2="297.54" stroke="#f2f2f2" stroke-width="0.65"/><line x1="386.4" x2="390.6" y1="294.88" y2="294.88" stroke="#f2f2f2" stroke-width="0.65"/><line x1="386.4" x2="389.2" y1="292.22" y2="292.22" stroke="#f2f2f2" stroke-width="0.65"/><line x1="386.4" x2="389.2" y1="289.57" y2="289.57" stroke="#f2f2f2" stroke-width="0.65"/><line x1="386.4" x2="389.2" y1="286.91" y2="286.91" stroke="#f2f2f2" stroke-width="0.65"/><line x1="386.4" x2="389.2" y1="284.26" y2="284.26" stroke="#f2f2f2" stroke-width="0.65"/><line x1="386.4" x2="390.6" y1="281.60" y2="281.60" stroke="#f2f2f2" stroke-width="0.65"/><line x1="386.4" x2="389.2" y1="278.94" y2="278.94" stroke="#f2f2f2" stroke-width="0.65"/><line x1="386.4" x2="389.2" y1="276.29" y2="276.29" stroke="#f2f2f2" stroke-width="0.65"/><line x1="386.4" x2="389.2" y1="273.63" y2="273.63" stroke="#f2f2f2" stroke-width="0.65"/><line x1="386.4" x2="389.2" y1="270.98" y2="270.98" stroke="#f2f2f2" stroke-width="0.65"/><line x1="386.4" x2="390.6" y1="268.32" y2="268.32" stroke="#f2f2f2" stroke-width="0.65"/><line x1="386.4" x2="389.2" y1="265.66" y2="265.66" stroke="#f2f2f2" stroke-width="0.65"/><line x1="386.4" x2="389.2" y1="263.01" y2="263.01" stroke="#f2f2f2" stroke-width="0.65"/><line x1="386.4" x2="389.2" y1="260.35" y2="260.35" stroke="#f2f2f2" stroke-width="0.65"/><line x1="386.4" x2="389.2" y1="257.70" y2="257.70" stroke="#f2f2f2" stroke-width="0.65"/><line x1="386.4" x2="390.6" y1="255.04" y2="255.04" stroke="#f2f2f2" stroke-width="0.65"/><line x1="386.4" x2="389.2" y1="252.38" y2="252.38" stroke="#f2f2f2" stroke-width="0.65"/><line x1="386.4" x2="389.2" y1="249.73" y2="249.73" stroke="#f2f2f2" stroke-width="0.65"/><line x1="386.4" x2="389.2" y1="247.07" y2="247.07" stroke="#f2f2f2" stroke-width="0.65"/><line x1="386.4" x2="389.2" y1="244.42" y2="244.42" stroke="#f2f2f2" stroke-width="0.65"/><line x1="386.4" x2="390.6" y1="241.76" y2="241.76" stroke="#f2f2f2" stroke-width="0.65"/><line x1="386.4" x2="389.2" y1="239.10" y2="239.10" stroke="#f2f2f2" stroke-width="0.65"/><line x1="386.4" x2="389.2" y1="236.45" y2="236.45" stroke="#f2f2f2" stroke-width="0.65"/><line x1="386.4" x2="389.2" y1="233.79" y2="233.79" stroke="#f2f2f2" stroke-width="0.65"/><line x1="386.4" x2="389.2" y1="231.14" y2="231.14" stroke="#f2f2f2" stroke-width="0.65"/><line x1="386.4" x2="390.6" y1="228.48" y2="228.48" stroke="#f2f2f2" stroke-width="0.65"/><line x1="386.4" x2="389.2" y1="225.82" y2="225.82" stroke="#f2f2f2" stroke-width="0.65"/><line x1="386.4" x2="389.2" y1="223.17" y2="223.17" stroke="#f2f2f2" stroke-width="0.65"/><line x1="386.4" x2="389.2" y1="220.51" y2="220.51" stroke="#f2f2f2" stroke-width="0.65"/><line x1="386.4" x2="389.2" y1="217.86" y2="217.86" stroke="#f2f2f2" stroke-width="0.65"/><line x1="386.4" x2="390.6" y1="215.20" y2="215.20" stroke="#f2f2f2" stroke-width="0.65"/><path d="M386.9 338.1 L388.3 318.3 L390.6 305.6 L391.7 318.3 L393.4 304.2 L395.4 321.1 L396.8 305.6 L398.2 329.6 L400.2 336.7 L402.5 335.3 L403.9 342.4 L405.3 338.1 L406.7 298.5 L407.6 332.5 L408.7 304.2 L409.9 298.5 L411.0 335.3 L412.4 309.8 L413.8 332.5 L415.2 308.4 L416.7 309.8 L418.1 302.7 L420.1 299.9 L421.8 304.2 L423.7 302.7 L425.2 298.5 L426.6 318.3 L428.0 332.5 L429.4 336.7 L430.8 326.8 L432.2 335.3 L433.7 309.8 L435.1 333.9 L436.5 332.5 L439.3 329.6 L442.2 338.1 L443.6 333.9 L445.0 329.6 L446.4 333.9 L447.8 318.3 L449.2 298.5 L450.7 295.7 L452.9 299.9 L454.1 318.3 L455.2 335.3 L456.3 338.1 L457.7 321.1 L459.2 335.3 L460.6 329.6 L462.0 324.0 L463.4 301.3 L464.8 284.3 L465.7 304.2 L467.1 335.3 L468.5 308.4 L469.9 329.6 L471.3 336.7 L472.7 318.3 L473.9 304.2 L475.3 335.3 L476.7 338.1 L478.4 307.0 L479.8 332.5 L481.2 326.8 L482.7 333.9 L484.1 318.3 L485.5 335.3 L487.5 329.6 L488.9 312.6 L490.3 291.4 L491.7 295.7 L493.1 292.8 L494.6 301.3 L496.0 291.4 L497.4 312.6 L498.8 292.8 L500.2 318.3 L501.6 326.8 L503.1 329.6 L505.0 332.5 L507.3 324.0 L508.7 298.5 L510.1 294.2 L510.0 295.7 L512.8 294.3 L515.1 295.7 L517.1 311.3 L518.5 298.5 L521.3 295.7 L524.2 292.8 L526.2 295.7 L527.6 304.2 L529.3 309.8 L530.4 318.3 L532.1 332.5 L534.1 336.8 L535.5 333.9 L536.9 318.3 L537.8 307.0 L538.3 332.5 L539.8 292.8 L541.2 295.7 L542.6 291.4 L544.0 301.3 L545.4 304.2 L546.8 318.3 L548.3 332.5 L549.7 326.8 L551.1 338.2 L552.5 336.8 L553.9 341.0 L555.3 338.2 L556.8 335.3 L558.2 326.8 L559.6 324.0 L561.0 309.8 L562.4 305.6 L563.8 312.7 L565.3 326.8 L566.7 335.3 L568.1 329.7 L569.5 341.0 L570.9 332.5 L572.3 336.8 L573.8 338.2 L575.2 333.9 L576.6 338.2 L578.0 336.8 L579.4 341.0 L580.8 324.0 L582.3 318.3 L583.7 335.3 L585.1 332.5 L586.5 341.0 L587.9 342.4 L589.3 326.8 L590.8 311.3 L592.2 332.5 L593.6 336.8 L595.0 338.2 L596.4 341.0 L597.8 338.2 L599.3 335.3 L600.7 339.6 L602.1 332.5 L603.5 316.9 L604.9 335.3 L606.3 338.2 L607.8 329.7 L609.2 312.7 L610.6 338.2 L612.0 341.0 L613.4 335.3 L614.8 319.8 L616.3 338.2 L617.7 335.3 L619.1 339.6 L620.5 333.9 L621.9 336.8 L623.3 335.3 L624.8 338.2 L626.2 329.7 L627.6 332.5 L629.0 324.0 L630.4 338.2 L631.8 335.3 L633.3 341.0 L634.7 318.3 L636.1 298.5 L636.9 294.3 L638.9 302.8 L640.3 305.6 L641.8 309.8 L643.2 332.5 L644.6 338.2 L646.0 335.3 L647.4 318.3 L648.8 338.2 L650.3 342.4 L651.7 332.5 L653.1 335.3 L654.5 339.6 L655.9 341.0 L657.4 338.2 L658.8 336.8 L660.2 338.2" fill="none" stroke="#b7ae40" stroke-width="0.85" stroke-linejoin="round"/><line x1="520" x2="520" y1="215.2" y2="348.0" stroke="#161690" stroke-width="1.1"/><line x1="613.4" x2="613.4" y1="215.2" y2="348.0" stroke="#c41818" stroke-width="0.95"/></svg><span class="t" style="left:296.8px;top:66.9px;font-size:6.80px;color:#1c1c9e;transform:scaleX(0.907);text-shadow:none">00:14:54</span><span class="t" style="left:296.8px;top:75.3px;font-size:6.80px;color:#1c1c9e;transform:scaleX(0.928);text-shadow:none">70,3dB</span><span class="t" style="left:391.4px;top:66.9px;font-size:6.80px;color:#c02020;transform:scaleX(0.820);text-shadow:none">00:17:1</span><span class="t" style="left:391.4px;top:75.3px;font-size:6.80px;color:#c02020;transform:scaleX(0.863);text-shadow:none">39,9dE</span><span class="t" style="left:146.9px;top:59.3px;font-size:6.90px;color:#d63c3c;transform:scaleX(0.843);text-shadow:0 0 0.2px rgba(214,60,60,.5)">130</span><span class="t" style="left:146.9px;top:72.6px;font-size:6.90px;color:#d63c3c;transform:scaleX(0.843);text-shadow:0 0 0.2px rgba(214,60,60,.5)">120</span><span class="t" style="left:146.9px;top:85.9px;font-size:6.90px;color:#d63c3c;transform:scaleX(0.882);text-shadow:0 0 0.2px rgba(214,60,60,.5)">110</span><span class="t" style="left:146.9px;top:99.2px;font-size:6.90px;color:#d63c3c;transform:scaleX(0.843);text-shadow:0 0 0.2px rgba(214,60,60,.5)">100</span><span class="t" style="left:150.0px;top:112.5px;font-size:6.90px;color:#d63c3c;transform:scaleX(0.860);text-shadow:0 0 0.2px rgba(214,60,60,.5)">90</span><span class="t" style="left:150.0px;top:125.7px;font-size:6.90px;color:#d63c3c;transform:scaleX(0.860);text-shadow:0 0 0.2px rgba(214,60,60,.5)">80</span><span class="t" style="left:150.0px;top:139.0px;font-size:6.90px;color:#d63c3c;transform:scaleX(0.860);text-shadow:0 0 0.2px rgba(214,60,60,.5)">70</span><span class="t" style="left:150.0px;top:152.3px;font-size:6.90px;color:#d63c3c;transform:scaleX(0.860);text-shadow:0 0 0.2px rgba(214,60,60,.5)">60</span><span class="t" style="left:150.0px;top:165.6px;font-size:6.90px;color:#d63c3c;transform:scaleX(0.860);text-shadow:0 0 0.2px rgba(214,60,60,.5)">50</span><span class="t" style="left:150.0px;top:178.9px;font-size:6.90px;color:#d63c3c;transform:scaleX(0.860);text-shadow:0 0 0.2px rgba(214,60,60,.5)">40</span><span class="t" style="left:150.0px;top:192.1px;font-size:6.90px;color:#d63c3c;transform:scaleX(0.860);text-shadow:0 0 0.2px rgba(214,60,60,.5)">30</span><span class="t" style="left:136.6px;top:133.0px;font-size:6.2px;color:#dc3434;transform-origin:0 0;transform:rotate(-90deg) scaleX(0.8)">dB</span><span class="t" style="left:172.2px;top:199.9px;font-size:7.00px;color:#333;transform:scaleX(0.830);">0:13</span><span class="t" style="left:234.0px;top:199.9px;font-size:7.00px;color:#333;transform:scaleX(0.830);">0:14</span><span class="t" style="left:295.8px;top:199.9px;font-size:7.00px;color:#333;transform:scaleX(0.830);">0:15</span><span class="t" style="left:358.6px;top:199.9px;font-size:7.00px;color:#333;transform:scaleX(0.830);">0:16</span><span class="t" style="left:380.0px;top:199.9px;font-size:7.00px;color:#333;transform:scaleX(0.830);">0:17</span><span class="t" style="left:418.6px;top:199.9px;font-size:7.00px;color:#333;transform:scaleX(0.830);">0:19</span><span class="t" style="left:144.2px;top:208.0px;font-size:7.00px;color:#333;transform:scaleX(0.898);">Mrz Sa 4 2000</span><span class="t" style="left:356.3px;top:208.0px;font-size:7.00px;color:#333;transform:scaleX(0.902);">Time</span><div style="position:absolute;left:135.4px;top:219.2px;width:316.4px;height:10.2px;background:#f2f2f1;border-top:0.6px solid #aaa;box-sizing:border-box"></div><div style="position:absolute;left:160.6px;top:222.6px;width:277.2px;height:2.6px;background:linear-gradient(#f0eeb0,#e6e35e 45%,#e6e35e 55%,#f0eeb0)"></div><div style="position:absolute;left:294.0px;top:220.2px;width:3.4px;height:7.4px;background:linear-gradient(90deg,#2cc02c,#4be04b 50%,#25b025);border-radius:1px 1px 1.6px 1.6px;border:0.5px solid #1f8f1f;box-sizing:border-box"></div><div style="position:absolute;left:387.4px;top:220.2px;width:3.4px;height:7.4px;background:linear-gradient(90deg,#2cc02c,#4be04b 50%,#25b025);border-radius:1px 1px 1.6px 1.6px;border:0.5px solid #1f8f1f;box-sizing:border-box"></div><div style="position:absolute;left:135.4px;top:229.0px;width:316.4px;height:33.4px;background:#f1f1f1"></div><span class="t" style="left:139.0px;top:232.9px;font-size:5.80px;color:#2a2acc;transform:scaleX(0.835);">Punkt A</span><div style="position:absolute;left:161.8px;top:232.1px;width:16.1px;height:8.3px;box-sizing:border-box;background:#fff;border:0.9px solid;border-color:#787878 #dcdcdc #dcdcdc #787878;box-shadow:0.6px 0.6px 0 #fff"></div><span class="t" style="left:163.7px;top:233.1px;font-size:5.90px;color:#2a2acc;transform:scaleX(0.775);">70,3</span><span class="t" style="left:179.7px;top:233.0px;font-size:6.20px;color:#3a3a3a;transform:scaleX(0.740);">@</span><div style="position:absolute;left:186.8px;top:232.1px;width:64.4px;height:8.3px;box-sizing:border-box;background:#fff;border:0.9px solid;border-color:#787878 #dcdcdc #dcdcdc #787878;box-shadow:0.6px 0.6px 0 #fff"></div><span class="t" style="left:188.7px;top:233.1px;font-size:5.90px;color:#2c2c2c;transform:scaleX(0.776);">04.03.2000 00:14:54</span><span class="t" style="left:261.2px;top:232.9px;font-size:5.80px;color:#cc2a2a;transform:scaleX(0.778);">Punkt B</span><div style="position:absolute;left:280.7px;top:232.1px;width:15.8px;height:8.3px;box-sizing:border-box;background:#fff;border:0.9px solid;border-color:#787878 #dcdcdc #dcdcdc #787878;box-shadow:0.6px 0.6px 0 #fff"></div><span class="t" style="left:282.6px;top:233.1px;font-size:5.90px;color:#cc2a2a;transform:scaleX(0.775);">39,9</span><span class="t" style="left:298.6px;top:233.0px;font-size:6.20px;color:#3a3a3a;transform:scaleX(0.740);">@</span><div style="position:absolute;left:305.4px;top:232.1px;width:64.2px;height:8.3px;box-sizing:border-box;background:#fff;border:0.9px solid;border-color:#787878 #dcdcdc #dcdcdc #787878;box-shadow:0.6px 0.6px 0 #fff"></div><span class="t" style="left:307.3px;top:233.1px;font-size:5.90px;color:#2c2c2c;transform:scaleX(0.770);">04.03.2000 00:17:03</span><span class="t" style="left:138.2px;top:243.5px;font-size:5.80px;color:#303030;transform:scaleX(0.791);">Max. zwischen A und B</span><div style="position:absolute;left:190.9px;top:243.8px;width:16.7px;height:8.3px;box-sizing:border-box;background:#fff;border:0.9px solid;border-color:#787878 #dcdcdc #dcdcdc #787878;box-shadow:0.6px 0.6px 0 #fff"></div><span class="t" style="left:192.8px;top:244.8px;font-size:5.90px;color:#2c2c2c;transform:scaleX(0.775);">72,7</span><span class="t" style="left:208.9px;top:244.7px;font-size:6.20px;color:#3a3a3a;transform:scaleX(0.740);">@</span><div style="position:absolute;left:215.1px;top:243.8px;width:64.2px;height:8.3px;box-sizing:border-box;background:#fff;border:0.9px solid;border-color:#787878 #dcdcdc #dcdcdc #787878;box-shadow:0.6px 0.6px 0 #fff"></div><span class="t" style="left:217.0px;top:244.8px;font-size:5.90px;color:#2c2c2c;transform:scaleX(0.776);">04.03.2000 00:15:13</span><span class="t" style="left:138.2px;top:254.3px;font-size:5.80px;color:#303030;transform:scaleX(0.789);">Min. zwischen A und B</span><div style="position:absolute;left:190.9px;top:254.9px;width:16.7px;height:8.3px;box-sizing:border-box;background:#fff;border:0.9px solid;border-color:#787878 #dcdcdc #dcdcdc #787878;box-shadow:0.6px 0.6px 0 #fff"></div><span class="t" style="left:192.8px;top:255.9px;font-size:5.90px;color:#2c2c2c;transform:scaleX(0.775);">33,0</span><span class="t" style="left:208.9px;top:255.7px;font-size:6.20px;color:#3a3a3a;transform:scaleX(0.740);">@</span><div style="position:absolute;left:215.1px;top:254.9px;width:64.2px;height:8.3px;box-sizing:border-box;background:#fff;border:0.9px solid;border-color:#787878 #dcdcdc #dcdcdc #787878;box-shadow:0.6px 0.6px 0 #fff"></div><span class="t" style="left:217.0px;top:255.9px;font-size:5.90px;color:#2c2c2c;transform:scaleX(0.776);">04.03.2000 00:15:42</span><span class="t" style="left:283.2px;top:250.3px;font-size:5.80px;color:#303030;transform:scaleX(0.780);">Mittel zwischen A und B</span><div style="position:absolute;left:341.0px;top:249.3px;width:26.3px;height:8.9px;box-sizing:border-box;background:#fff;border:0.9px solid;border-color:#787878 #dcdcdc #dcdcdc #787878;box-shadow:0.6px 0.6px 0 #fff"></div><span class="t" style="left:342.9px;top:250.6px;font-size:5.90px;color:#2c2c2c;transform:scaleX(0.749);">46,5</span><div style="position:absolute;left:0.0px;top:0.0px;width:453.0px;height:262.0px;box-sizing:border-box;border:1px solid #7b8590;border-bottom-color:#6f7377"></div></div></body></html>
